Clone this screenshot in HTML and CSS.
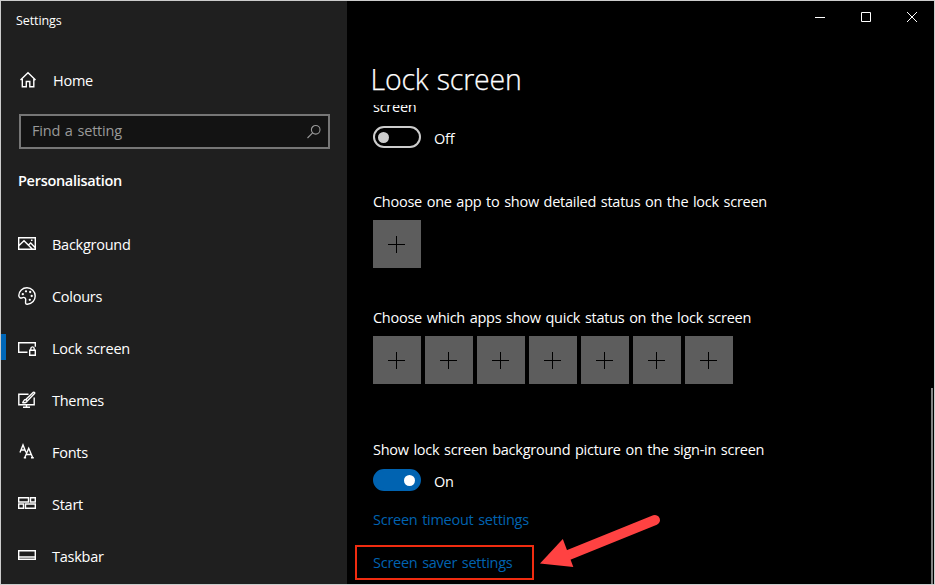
FILE: index.html
```html
<!DOCTYPE html>
<html lang="en-GB">
<head>
  <meta charset="UTF-8">
  <title>Settings</title>
  <link rel="stylesheet" href="styles.css">
</head>
<body>
  <div class="window">
    <aside class="sidebar">
      <div class="app-title">Settings</div>
      <a class="home">
        <svg width="18" height="18" viewBox="0 0 18 18"><path d="M1.500 9 9 1.800 16.500 9M3.300 8v7.700h4v-5.200h3.500v5.200h4V8"/></svg>
        <span>Home</span>
      </a>
      <div class="search">
        <span>Find a setting</span>
        <svg width="16" height="16" viewBox="0 0 16 16"><circle cx="9.700" cy="5.800" r="4.300"/><path d="M6.600 8.900 1.500 14"/></svg>
      </div>
      <h2>Personalisation</h2>
      <nav>
        <a class="item">
          <svg width="18" height="18" viewBox="0 0 18 18"><path d="M.7 2.700h16.600v11.600H.7zM1 10.500l5-4.800 8.500 8.500M10.500 10l2.200-2 4.300 4.500"/><path d="M13 5.300h1.500"/></svg>
          <span>Background</span>
        </a>
        <a class="item">
          <svg width="18" height="18" viewBox="0 0 18 18"><path d="M9.300 17.200c5-.3 7.900-4 7.900-8.200 0-4.700-3.600-8.200-8.200-8.200C4.500.8 1 4 .8 8.500c0 2 1.700 3 3.200 2.300 1.700-.8 3.500-.4 3.700 1.500.2 1.800-1.200 4.900 1.600 4.900z"/><g class="dots"><circle cx="4.800" cy="7.200" r="1.150"/><circle cx="8" cy="4.300" r="1.150"/><circle cx="12.200" cy="5" r="1.150"/><circle cx="13.700" cy="9" r="1.150"/><circle cx="11.800" cy="12.800" r="1.150"/></g></svg>
          <span>Colours</span>
        </a>
        <a class="item active">
          <svg width="18" height="18" viewBox="0 0 18 18"><path d="M9.500 13.300H.7V3.700h16.600v4M11.700 11.200h5.600v5h-5.600zM12.800 11V9.700c0-2.400 3.400-2.400 3.400 0V11"/></svg>
          <span>Lock screen</span>
        </a>
        <a class="item">
          <svg width="18" height="18" viewBox="0 0 18 18"><path d="M10.500 3.200H.8v10.500h15.400V6.500M5 16.300h7M8.500 13.700v2.600M4.300 11.500c1.500-.3 1-3 3.500-3l1.400 1.300c0 1.700-2.500 2.300-4.900 1.700zM8 8.300l7.300-7c1-.6 1.800.4 1.200 1.200l-7 7.200"/></svg>
          <span>Themes</span>
        </a>
        <a class="item">
          <svg width="18" height="18" viewBox="0 0 18 18"><path d="M2 9.500 5 2l3 7.500M3 7h4M6.700 14.800l4-9.500 4 9.500M8.200 11.500h5M5.800 14.800h2.300M13 14.800h2.800"/></svg>
          <span>Fonts</span>
        </a>
        <a class="item">
          <svg width="18" height="18" viewBox="0 0 18 18"><path d="M.7 2.700h9.800v4.300H.7zM12.500 2.700h4.800v4.300h-4.800zM.7 9h4.800v4.300H.7zM7.500 9h9.800v4.300H7.500z"/></svg>
          <span>Start</span>
        </a>
        <a class="item">
          <svg width="18" height="18" viewBox="0 0 18 18"><path d="M.7 3.700h16.600v8.600H.7zM1 10h16"/></svg>
          <span>Taskbar</span>
        </a>
      </nav>
    </aside>

    <main class="main">
      <div class="caption">
        <svg width="12" height="12" viewBox="0 0 12 12"><path d="M1 6.500h10"/></svg>
        <svg width="12" height="12" viewBox="0 0 12 12"><path d="M1.500 1.500h9v9h-9z"/></svg>
        <svg width="12" height="12" viewBox="0 0 12 12"><path d="m1 1 10 10M11 1 1 11"/></svg>
      </div>
      <h1>Lock screen</h1>
      <div class="content">
        <p class="label cut">screen</p>
        <div class="toggle-row">
          <span class="toggle"></span>
          <span>Off</span>
        </div>

        <p class="label detailed">Choose one app to show detailed status on the lock screen</p>
        <div class="tiles">
          <button class="tile"></button>
        </div>

        <p class="label quick">Choose which apps show quick status on the lock screen</p>
        <div class="tiles">
          <button class="tile"></button>
          <button class="tile"></button>
          <button class="tile"></button>
          <button class="tile"></button>
          <button class="tile"></button>
          <button class="tile"></button>
          <button class="tile"></button>
        </div>

        <p class="label signin">Show lock screen background picture on the sign-in screen</p>
        <div class="toggle-row">
          <span class="toggle on"></span>
          <span>On</span>
        </div>
        <a class="link timeout">Screen timeout settings</a>
        <a class="link saver">Screen saver settings</a>
      </div>
    </main>

    <div class="scrollbar"></div>
    <svg class="arrow" width="122" height="56" viewBox="0 0 122 56">
      <path class="shaft" d="M26 46 115 10"/>
      <path class="head" d="M0 53.500 22.800 29 33.300 57z"/>
    </svg>
  </div>
</body>
</html>
```
FILE: styles.css
```css
* {
  box-sizing: border-box;
}
body {
  margin: 0;
  font-family: "Open Sans", "Noto Sans", sans-serif;
  font-size: 14.5px;
  letter-spacing: -0.26px;
  word-spacing: 1.2px;
  line-height: 20px;
  color: #fff;
  background: #000;
}
.window {
  position: relative;
  display: flex;
  width: 935px;
  height: 585px;
  border: 1px solid #ccc;
  overflow: hidden;
}
svg {
  fill: none;
  stroke: #fff;
  stroke-width: 1.4;
  flex: none;
}

/* sidebar */
.sidebar {
  width: 346px;
  background: #1f1f1f;
}
.app-title {
  padding: 10px 15px 0;
  font-size: 12.5px;
  letter-spacing: -0.1px;
}
.home {
  display: flex;
  align-items: center;
  gap: 16px;
  margin-top: 39px;
  padding-left: 18px;
  height: 22px;
}
.home svg {
  margin-top: -2px;
}
.search {
  display: flex;
  align-items: center;
  justify-content: space-between;
  width: 311px;
  height: 35px;
  margin: 22px 0 0 18px;
  padding: 0 6px 2px 11px;
  border: 2px solid #767676;
  background: #131313;
  color: #999;
  letter-spacing: -0.2px;
}
.search svg {
  margin-top: 2px;
  stroke: #999;
  stroke-width: 1.1;
}
h2 {
  margin: 22px 0 27px 17px;
  font-size: 14.5px;
  font-weight: 600;
  letter-spacing: -0.3px;
  line-height: 20px;
}
.item {
  display: flex;
  align-items: center;
  gap: 16px;
  height: 52px;
  padding-left: 17px;
}
.item span {
  padding-top: 2px;
}
.item .dots {
  fill: #fff;
  stroke: none;
}
.active {
  background: linear-gradient(#0067b8, #0067b8) no-repeat 0 12px / 5px 26px;
}

/* main pane */
.main {
  flex: 1;
  display: flex;
  flex-direction: column;
  padding-left: 8px;
}
.caption {
  display: flex;
  justify-content: flex-end;
  gap: 34px;
  height: 32px;
  padding: 10px 16px 0 0;
}
.caption svg {
  stroke-width: 1;
}
h1 {
  margin: 26px 0 0 15.5px;
  font-size: 28.5px;
  font-weight: 300;
  letter-spacing: -0.2px;
  line-height: 40px;
  -webkit-text-stroke: 0.25px #fff;
}
.content {
  flex: 1;
  margin-top: 6px;
  padding-left: 18px;
  overflow: hidden;
}
.label {
  margin: 0;
}
/* scrolled partly under the heading */
.cut {
  margin-top: -8px;
}
.toggle-row {
  display: flex;
  align-items: center;
  gap: 13px;
  height: 22px;
  margin-top: 9px;
}
.toggle-row span:last-child {
  padding-top: 3px;
}
.toggle {
  display: flex;
  align-items: center;
  width: 48px;
  height: 22px;
  padding: 0 3px;
  border: 2px solid #ccc;
  border-radius: 11px;
}
.toggle::before {
  content: "";
  width: 11px;
  height: 11px;
  border-radius: 50%;
  background: #ccc;
}
.toggle.on {
  justify-content: flex-end;
  padding-right: 4px;
  border-color: #0063b1;
  background: #0063b1;
}
.toggle.on::before {
  background: #fff;
}
.detailed {
  margin-top: 44px;
}
.quick {
  margin-top: 40px;
}
.signin {
  margin-top: 56px;
}
.tiles {
  display: flex;
  gap: 4px;
  margin-top: 8px;
}
.tile {
  width: 48px;
  height: 48px;
  padding: 0;
  border: 0;
  background:
    linear-gradient(#000, #000) no-repeat 15px 24px / 17px 1px,
    linear-gradient(#000, #000) no-repeat 23px 16px / 1px 17px,
    #5d5d5d;
}
.link {
  display: block;
  color: #0063b1;
}
.timeout {
  margin-top: 19px;
}
.saver {
  width: 179px;
  height: 35px;
  margin: 15px 0 0 -18px;
  padding: 6px 16px;
  border: 2px solid #f02c10;
}

/* drawn over the page */
.scrollbar {
  position: absolute;
  right: 1px;
  top: 387px;
  bottom: 0;
  width: 2px;
  background: #858585;
}
.arrow {
  position: absolute;
  left: 539px;
  top: 509px;
  overflow: visible;
}
.arrow .shaft {
  stroke: #ff4242;
  stroke-width: 10;
  stroke-linecap: round;
}
.arrow .head {
  fill: #ff4242;
  stroke: none;
}
```
